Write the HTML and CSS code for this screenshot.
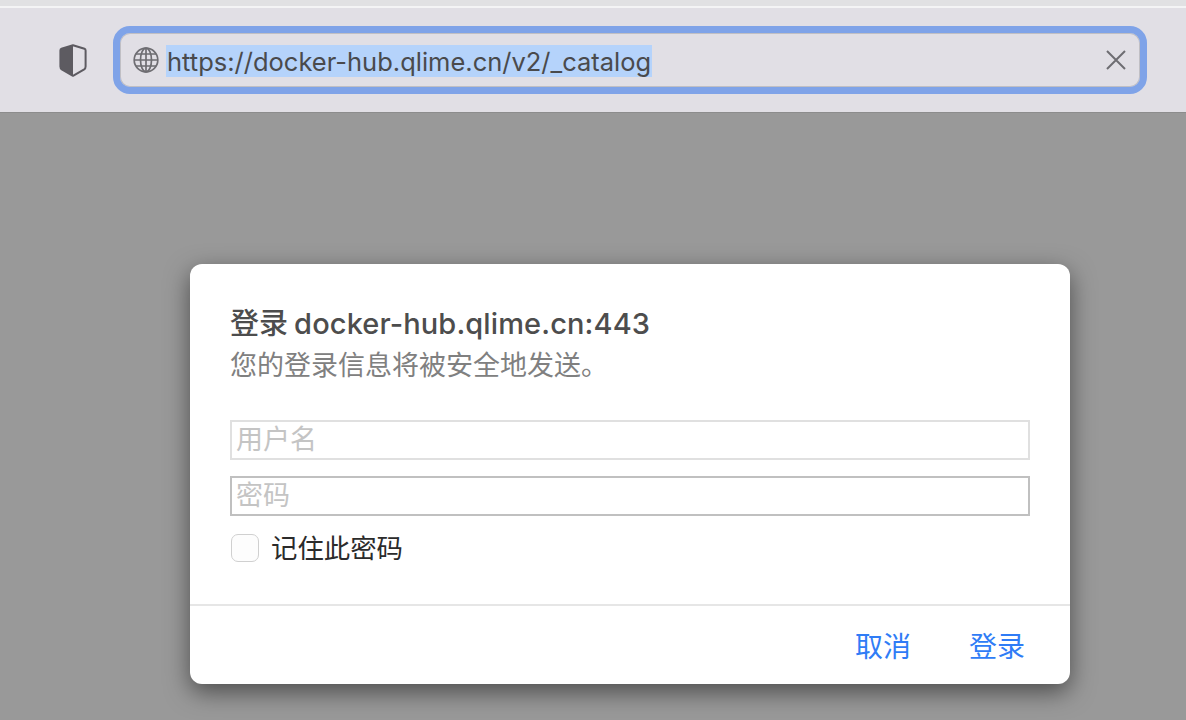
FILE: index.html
```html
<!DOCTYPE html>
<html lang="zh-CN">
<head>
    <meta charset="UTF-8">
    <title>登录 docker-hub.qlime.cn:443</title>
    <link rel="stylesheet" href="styles.css">
</head>
<body>

<div class="topstrip"></div>

<header class="toolbar">
    <svg class="shield" width="28" height="33" viewBox="0 0 28 33">
        <path d="M14 1.2 L25.5 4.8 Q26.6 5.2 26.6 6.4 V22.5 Q26.6 24.4 25.2 25.3 L14 31.8 L2.8 25.3 Q1.4 24.4 1.4 22.5 V6.4 Q1.4 5.2 2.5 4.8 Z" fill="none" stroke="#5d5b61" stroke-width="2" stroke-linejoin="round"/>
        <path d="M14 1.2 V31.8 L2.8 25.3 Q1.4 24.4 1.4 22.5 V6.4 Q1.4 5.2 2.5 4.8 Z" fill="#5d5b61"/>
    </svg>
    <div class="urlbar">
        <svg class="globe" width="26" height="26" viewBox="0 0 26 26" fill="none" stroke="#6e6d72" stroke-width="1.7">
            <circle cx="13" cy="13" r="11.8"/>
            <ellipse cx="13" cy="13" rx="5.5" ry="11.8"/>
            <path d="M13 1.2 V24.8 M1.2 13 H24.8 M3 7 H23 M3 19 H23"/>
        </svg>
        <div class="url">
            <span class="url-selected">https://docker-hub.qlime.cn/v2/_catalog</span>
        </div>
        <svg class="clear" width="20" height="20" viewBox="0 0 20 20" fill="none" stroke="#6e6d72" stroke-width="2">
            <path d="M1 1 L19 19 M19 1 L1 19"/>
        </svg>
    </div>
</header>

<main class="page">
    <form class="dialog">
        <div class="dialog-body">
            <h1>登录 docker-hub.qlime.cn:443</h1>
            <p class="subtitle">您的登录信息将被安全地发送。</p>
            <input class="field" type="text" placeholder="用户名">
            <input class="field field-pass" type="text" placeholder="密码">
            <label class="remember">
                <span class="checkbox"></span>
                <span class="remember-text">记住此密码</span>
            </label>
        </div>
        <div class="dialog-footer">
            <button type="button" class="link-btn">取消</button>
            <button type="button" class="link-btn">登录</button>
        </div>
    </form>
</main>

</body>
</html>
```

FILE: styles.css
```css
html, body {
    height: 100%;
}
body {
    margin: 0;
    overflow: hidden;
    background: #999999;
    font-family: Inter, "Noto Sans CJK SC", sans-serif;
}
.topstrip {
    height: 6px;
    background: #e1e1e3;
    border-bottom: 2px solid #f4f4f5;
}
.toolbar {
    height: 105px;
    box-sizing: border-box;
    display: flex;
    align-items: center;
    padding: 0 39px 0 59px;
    background: #e1dfe5;
    border-bottom: 1px solid #8c8c8c;
}
.shield {
    flex: none;
    margin-right: 26px;
}
.urlbar {
    flex: 1;
    height: 68px;
    box-sizing: border-box;
    display: flex;
    align-items: center;
    padding: 0 14px 0 13px;
    border: 7px solid #7fa3e8;
    border-radius: 17px;
    box-shadow: inset 0 0 0 1px #c0bfc4;
}
.globe {
    flex: none;
    margin-right: 7px;
}
.url {
    flex: 1;
    display: flex;
    padding-top: 2px;
}
.url-selected {
    padding: 2px 1px 0;
    font-size: 25.5px;
    line-height: 30px;
    color: #4a4a4c;
    background: #b5d3fb;
}
.clear {
    flex: none;
}
.page {
    padding: 151px 0 0 190px;
}
.dialog {
    width: 880px;
    height: 420px;
    display: flex;
    flex-direction: column;
    background: white;
    border-radius: 12px;
    box-shadow: 0 8px 24px rgba(0, 0, 0, 0.5);
}
.dialog-body {
    height: 342px;
    box-sizing: border-box;
    padding: 41px 40px 0;
    border-bottom: 2px solid #e6e6e6;
}
h1 {
    margin: 0;
    font-size: 29px;
    line-height: 38px;
    font-weight: 500;
    letter-spacing: 0.12px;
    word-spacing: -2px;
    color: #4d4d4d;
}
.subtitle {
    margin: 0 0 32px;
    font-size: 27px;
    line-height: 45px;
    color: #808080;
}
.field {
    display: block;
    width: 100%;
    height: 40px;
    box-sizing: border-box;
    margin: 0 0 16px;
    padding: 0 4px 2px;
    border: 2px solid #e0e0e0;
    border-radius: 0;
    outline: none;
    font-family: inherit;
    font-size: 27px;
}
.field-pass {
    border-color: #c0c0c0;
    margin-bottom: 18px;
}
.field::placeholder {
    color: #c4c4c4;
    opacity: 1;
}
.remember {
    display: flex;
    align-items: center;
    gap: 12px;
    padding-left: 1px;
    font-size: 26.4px;
    line-height: 28px;
    color: #2b2b2b;
}
.checkbox {
    width: 28px;
    height: 28px;
    box-sizing: border-box;
    border: 1px solid #d0d0d0;
    border-radius: 7px;
    background: #fdfdfd;
}
.dialog-footer {
    flex: 1;
    display: flex;
    justify-content: flex-end;
    align-items: center;
    gap: 58px;
    padding: 0 45px 1px 0;
}
.link-btn {
    padding: 0;
    border: none;
    background: none;
    font-family: inherit;
    font-size: 28px;
    color: #2f7cf6;
}
```
